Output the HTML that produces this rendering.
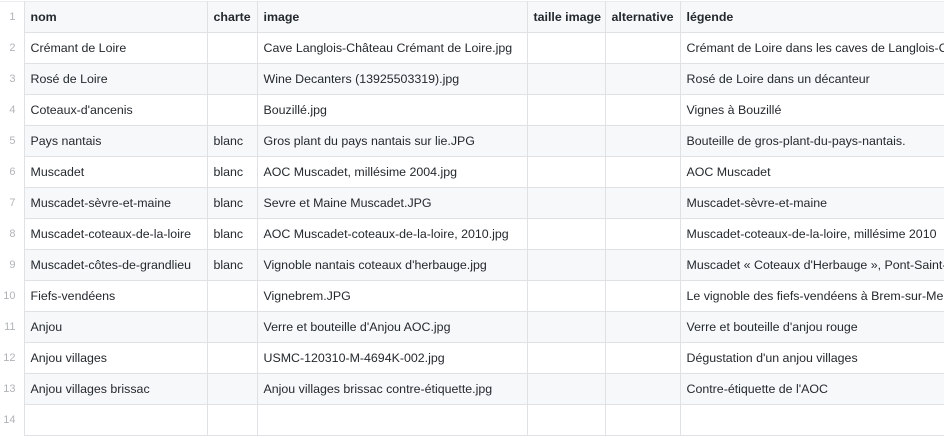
<!DOCTYPE html>
<html><head><meta charset="utf-8"><style>
html,body{margin:0;padding:0;background:#fff;width:944px;height:409px;overflow:hidden}
table{position:absolute;left:0;top:1px;border-collapse:collapse;font-family:"Liberation Sans",Helvetica,Arial,sans-serif;font-size:12.4px;color:#24292e;table-layout:fixed;width:1100px}
td,th{height:30px;padding:0 6px;border:1px solid #dfe2e5;white-space:nowrap;overflow:hidden;text-align:left;line-height:30px}
th{font-weight:bold}
tr:nth-child(odd){background:#f6f8fa}
td.n,th.n{border:none;border-right:1px solid #dfe2e5;background:#fff;color:#b0b4b8;text-align:right;padding:0 8px 0 0;font-weight:normal;font-size:11px}
tr:first-child th{border-top:1px solid #eaecef}
</style></head><body>
<table>
<colgroup><col style="width:24px"><col style="width:183px"><col style="width:50px"><col style="width:270px"><col style="width:78px"><col style="width:75px"><col style="width:420px"></colgroup>
<tr><th class="n">1</th><th>nom</th><th>charte</th><th>image</th><th>taille image</th><th>alternative</th><th>légende</th></tr>
<tr><td class="n">2</td><td>Crémant de Loire</td><td></td><td>Cave Langlois-Château Crémant de Loire.jpg</td><td></td><td></td><td>Crémant de Loire dans les caves de Langlois-Château</td></tr>
<tr><td class="n">3</td><td>Rosé de Loire</td><td></td><td>Wine Decanters (13925503319).jpg</td><td></td><td></td><td>Rosé de Loire dans un décanteur</td></tr>
<tr><td class="n">4</td><td>Coteaux-d'ancenis</td><td></td><td>Bouzillé.jpg</td><td></td><td></td><td>Vignes à Bouzillé</td></tr>
<tr><td class="n">5</td><td>Pays nantais</td><td>blanc</td><td>Gros plant du pays nantais sur lie.JPG</td><td></td><td></td><td>Bouteille de gros-plant-du-pays-nantais.</td></tr>
<tr><td class="n">6</td><td>Muscadet</td><td>blanc</td><td>AOC Muscadet, millésime 2004.jpg</td><td></td><td></td><td>AOC Muscadet</td></tr>
<tr><td class="n">7</td><td>Muscadet-sèvre-et-maine</td><td>blanc</td><td>Sevre et Maine Muscadet.JPG</td><td></td><td></td><td>Muscadet-sèvre-et-maine</td></tr>
<tr><td class="n">8</td><td>Muscadet-coteaux-de-la-loire</td><td>blanc</td><td>AOC Muscadet-coteaux-de-la-loire, 2010.jpg</td><td></td><td></td><td>Muscadet-coteaux-de-la-loire, millésime 2010</td></tr>
<tr><td class="n">9</td><td>Muscadet-côtes-de-grandlieu</td><td>blanc</td><td>Vignoble nantais coteaux d'herbauge.jpg</td><td></td><td></td><td>Muscadet « Coteaux d'Herbauge », Pont-Saint-Martin</td></tr>
<tr><td class="n">10</td><td>Fiefs-vendéens</td><td></td><td>Vignebrem.JPG</td><td></td><td></td><td>Le vignoble des fiefs-vendéens à Brem-sur-Mer</td></tr>
<tr><td class="n">11</td><td>Anjou</td><td></td><td>Verre et bouteille d'Anjou AOC.jpg</td><td></td><td></td><td>Verre et bouteille d'anjou rouge</td></tr>
<tr><td class="n">12</td><td>Anjou villages</td><td></td><td>USMC-120310-M-4694K-002.jpg</td><td></td><td></td><td>Dégustation d'un anjou villages</td></tr>
<tr><td class="n">13</td><td>Anjou villages brissac</td><td></td><td>Anjou villages brissac contre-étiquette.jpg</td><td></td><td></td><td>Contre-étiquette de l'AOC</td></tr>
<tr><td class="n">14</td><td></td><td></td><td></td><td></td><td></td><td></td></tr>
</table>
</body></html>
